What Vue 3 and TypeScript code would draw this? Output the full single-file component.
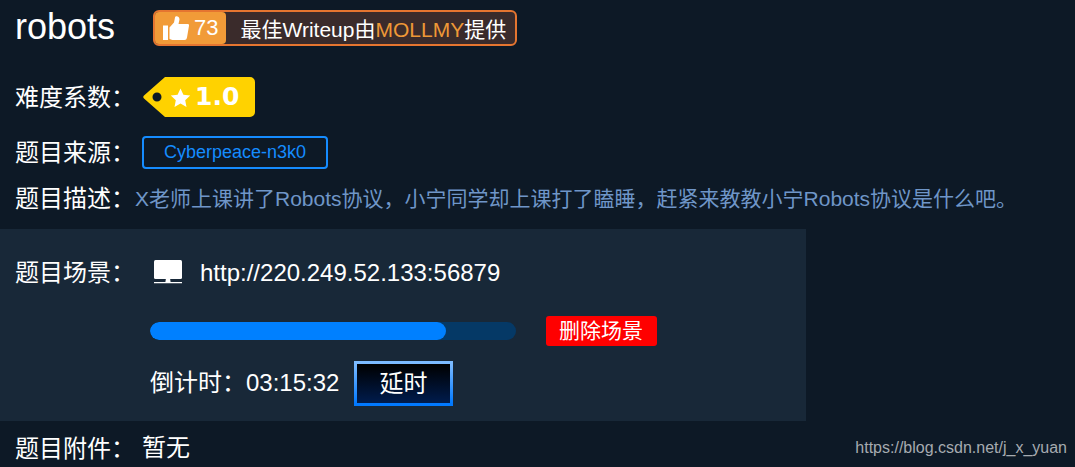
<script setup lang="ts">
import { computed, ref } from 'vue'

interface Challenge {
  title: string
  likes: number
  author: string
  difficulty: string
  source: string
  description: string
  address: string
  attachment: string
}

const challenge: Challenge = {
  title: 'robots',
  likes: 73,
  author: 'MOLLMY',
  difficulty: '1.0',
  source: 'Cyberpeace-n3k0',
  description: 'X老师上课讲了Robots协议，小宁同学却上课打了瞌睡，赶紧来教教小宁Robots协议是什么吧。',
  address: 'http://220.249.52.133:56879',
  attachment: '暂无',
}

const remaining = ref(11732)
const total = 14500

const pad = (n: number): string => String(n).padStart(2, '0')
const clock = computed(() => {
  const s = remaining.value
  return `${pad(Math.floor(s / 3600))}:${pad(Math.floor(s / 60) % 60)}:${pad(s % 60)}`
})
const percent = computed(() => (remaining.value / total) * 100)
</script>

<template>
  <main class="page">
    <header class="head">
      <h1 class="title">{{ challenge.title }}</h1>
      <div class="writeup">
        <button class="like" type="button">
          <svg class="thumb" viewBox="0 0 26 26" aria-hidden="true">
            <path d="M0 10.500h5V25H0z" />
            <path d="M6.500 12.500L11 7.500L12 2.500C12.300 .3 16.500 .8 16.500 4.500L15.500 9H24.500c1.300 0 1.700.8 1.500 1.800L24 22.500c-.4 1.700-1 2.500-2.500 2.500H9.500c-1.200 0-1.800-.5-3-1.200z" />
          </svg>
          <span>{{ challenge.likes }}</span>
        </button>
        <p class="credit">最佳Writeup由<span class="author">{{ challenge.author }}</span>提供</p>
      </div>
    </header>

    <section class="row difficulty">
      <h2 class="label">难度系数：</h2>
      <div class="tag">
        <svg class="tag-shape" viewBox="0 0 112 40" aria-hidden="true">
          <path
            fill="#ffd200"
            fill-rule="evenodd"
            d="M22 0H107a5 5 0 0 1 5 5V35a5 5 0 0 1-5 5H22L1 21.500Q-.5 20 1 18.500ZM14 15.500a4.500 4.500 0 1 0 0 9a4.500 4.500 0 1 0 0-9z"
          />
          <path
            fill="#fff"
            d="M37.500 11.500l2.900 6.200 6.800.8-5 4.700 1.300 6.800-6-3.400-6 3.400 1.300-6.800-5-4.700 6.800-.8z"
          />
        </svg>
        <span class="tag-value">{{ challenge.difficulty }}</span>
      </div>
    </section>

    <section class="row source">
      <h2 class="label">题目来源：</h2>
      <span class="source-name">{{ challenge.source }}</span>
    </section>

    <section class="row about">
      <h2 class="label">题目描述：</h2>
      <p class="description">{{ challenge.description }}</p>
    </section>

    <section class="scene">
      <h2 class="label">题目场景：</h2>
      <div class="scene-body">
        <div class="address">
          <svg class="monitor" viewBox="0 0 28 24" aria-hidden="true">
            <rect x="0" y="0" width="28" height="19" rx="1.500" />
            <path d="M12 18h4l.6 4H28v1.200H0V22h11.400z" />
          </svg>
          <a class="link" :href="challenge.address">{{ challenge.address }}</a>
        </div>
        <div class="lifetime">
          <div
            class="track"
            role="progressbar"
            aria-label="倒计时"
            :aria-valuenow="Math.round(percent)"
            aria-valuemin="0"
            aria-valuemax="100"
          >
            <div class="fill" :style="{ width: percent + '%' }"></div>
          </div>
          <button class="remove" type="button">删除场景</button>
        </div>
        <div class="countdown">
          <p class="time">倒计时：{{ clock }}</p>
          <button class="extend" type="button" @click="remaining = total">延时</button>
        </div>
      </div>
    </section>

    <footer class="foot">
      <section class="row">
        <h2 class="label">题目附件：</h2>
        <p class="attachment">{{ challenge.attachment }}</p>
      </section>
      <p class="credit-url">https://blog.csdn.net/j_x_yuan</p>
    </footer>
  </main>
</template>

<style>
body {
  background: #0d1926;
}
</style>

<style scoped>
.page {
  color: #fff;
  font-family: "Liberation Sans", Arial, "Noto Sans CJK SC", sans-serif;
  font-size: 24px;
  line-height: 32px;
}

h1,
h2,
p {
  margin: 0;
  font-size: inherit;
  font-weight: 400;
}

button {
  margin: 0;
  padding: 0;
  border: 0;
  color: inherit;
  font-family: inherit;
  cursor: pointer;
}

.head,
.row {
  display: flex;
  align-items: center;
  padding-left: 15px;
}

.head {
  height: 56px;
}

.title {
  width: 138px;
  padding-bottom: 2px;
  font-size: 36px;
}

.writeup {
  display: flex;
  height: 32px;
  border: 2px solid #e57530;
  border-radius: 6px;
  background: #3a2b2b;
  font-size: 21px;
}

.like {
  display: flex;
  align-items: center;
  gap: 5px;
  padding: 0 8px;
  border-radius: 4px;
  background: #f19b38;
  font-size: 22px;
}

.thumb {
  width: 26px;
  height: 26px;
  fill: #fff;
}

.credit {
  padding: 2px 9px 0 14px;
}

.author {
  color: #ee9837;
}

.label {
  flex: none;
  width: 120px;
}

.row .label,
.description {
  padding-top: 2px;
}

.difficulty {
  height: 82px;
}

.tag {
  display: grid;
  width: 112px;
  margin-left: 8px;
}

.tag-shape,
.tag-value {
  grid-area: 1 / 1;
}

.tag-shape {
  width: 112px;
  height: 40px;
}

.tag-value {
  align-self: center;
  padding-left: 52px;
  font-family: "DejaVu Sans", Verdana, sans-serif;
  font-size: 25px;
  font-weight: 700;
}

.source {
  height: 28px;
}

.source-name {
  margin-left: 7px;
  padding: 0 20px;
  border: 2px solid #158cff;
  border-radius: 4px;
  color: #158cff;
  font-size: 18px;
  line-height: 29px;
}

.about {
  height: 63px;
}

.description {
  color: #6f96c8;
  font-size: 21px;
}

.scene {
  display: flex;
  box-sizing: border-box;
  width: 75%;
  padding: 28px 15px 15px;
  background: #182838;
}

.scene-body {
  flex: 1;
  padding-left: 15px;
}

.address {
  display: flex;
  align-items: center;
  gap: 18px;
  padding-left: 4px;
}

.monitor {
  width: 28px;
  height: 24px;
  padding-bottom: 2px;
  fill: #fff;
}

.link {
  color: inherit;
  text-decoration: none;
}

.lifetime {
  display: flex;
  align-items: center;
  gap: 30px;
  margin-top: 27px;
}

.track {
  width: 366px;
  height: 18px;
  overflow: hidden;
  border-radius: 9px;
  background: #053966;
}

.fill {
  height: 100%;
  border-radius: 9px;
  background: #0080ff;
}

.remove {
  height: 30px;
  padding: 0 14px 0 13px;
  border-radius: 3px;
  background: #f00;
  font-size: 21px;
  line-height: 30px;
}

.countdown {
  display: flex;
  align-items: center;
  gap: 15px;
  margin-top: 15px;
}

.time {
  padding-bottom: 2px;
}

.extend {
  height: 45px;
  padding: 0 23px 0 22px;
  border: 3px solid;
  border-image: linear-gradient(#7dbbff, #0079ff) 1;
  background: linear-gradient(#000, #001c4d);
  font-size: 24px;
  line-height: 39px;
}

.foot {
  display: flex;
  align-items: center;
  justify-content: space-between;
  box-sizing: border-box;
  height: 46px;
  padding-top: 8px;
}

.attachment {
  margin-left: 7px;
}

.credit-url {
  padding-right: 8px;
  color: #a6abb0;
  font-size: 16px;
}
</style>
